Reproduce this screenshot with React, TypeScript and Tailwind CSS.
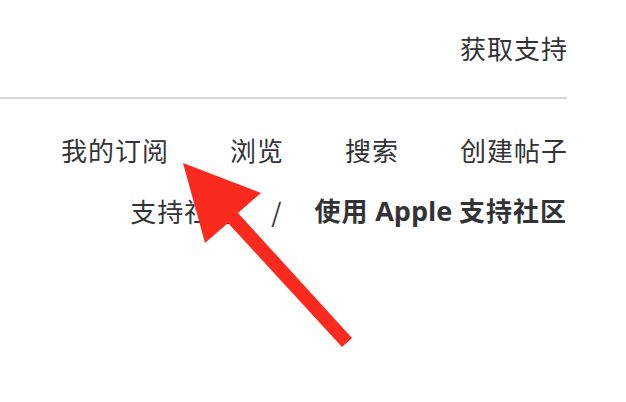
export default function App() {
  return (
    <div className="relative h-[402px] w-[626px] overflow-hidden bg-white font-['Noto_Sans_CJK_SC','Open_Sans',sans-serif] text-[#333336]">
      <div className="w-[567px]">
        <div className="flex h-[97px] items-center justify-end pb-[2px]">
          <span className="text-[26px] tracking-[1px] mr-[-1px]">获取支持</span>
        </div>
        <div className="h-[2px] bg-[#d6d6d6]" />
        <nav className="mt-[33px] flex justify-end gap-[61px] text-[26px] tracking-[1px] mr-[-1px] leading-[36px]">
          <span>我的订阅</span>
          <span>浏览</span>
          <span>搜索</span>
          <span>创建帖子</span>
        </nav>
        <div className="mt-[24px] flex justify-end items-center text-[26px] leading-[36px]">
          <span className="tracking-[1px]">支持社区</span>
          <span className="ml-[33px] mr-[33px]">/</span>
          <span className="font-bold font-['Open_Sans','Noto_Sans_CJK_SC',sans-serif]">
            <span className="font-['Noto_Sans_CJK_SC',sans-serif] tracking-[1px]">使用</span>{" "}
            <span className="text-[27px]">Apple</span>{" "}
            <span className="font-['Noto_Sans_CJK_SC',sans-serif] tracking-[1px]">支持社区</span>
          </span>
        </div>
      </div>
      <svg className="absolute left-0 top-0" width="626" height="402" viewBox="0 0 626 402">
        <polygon
          points="183,163 261,193 238,213 352,338 342,347 228,223 205,243"
          fill="#fb2a1f"
        />
      </svg>
    </div>
  );
}
